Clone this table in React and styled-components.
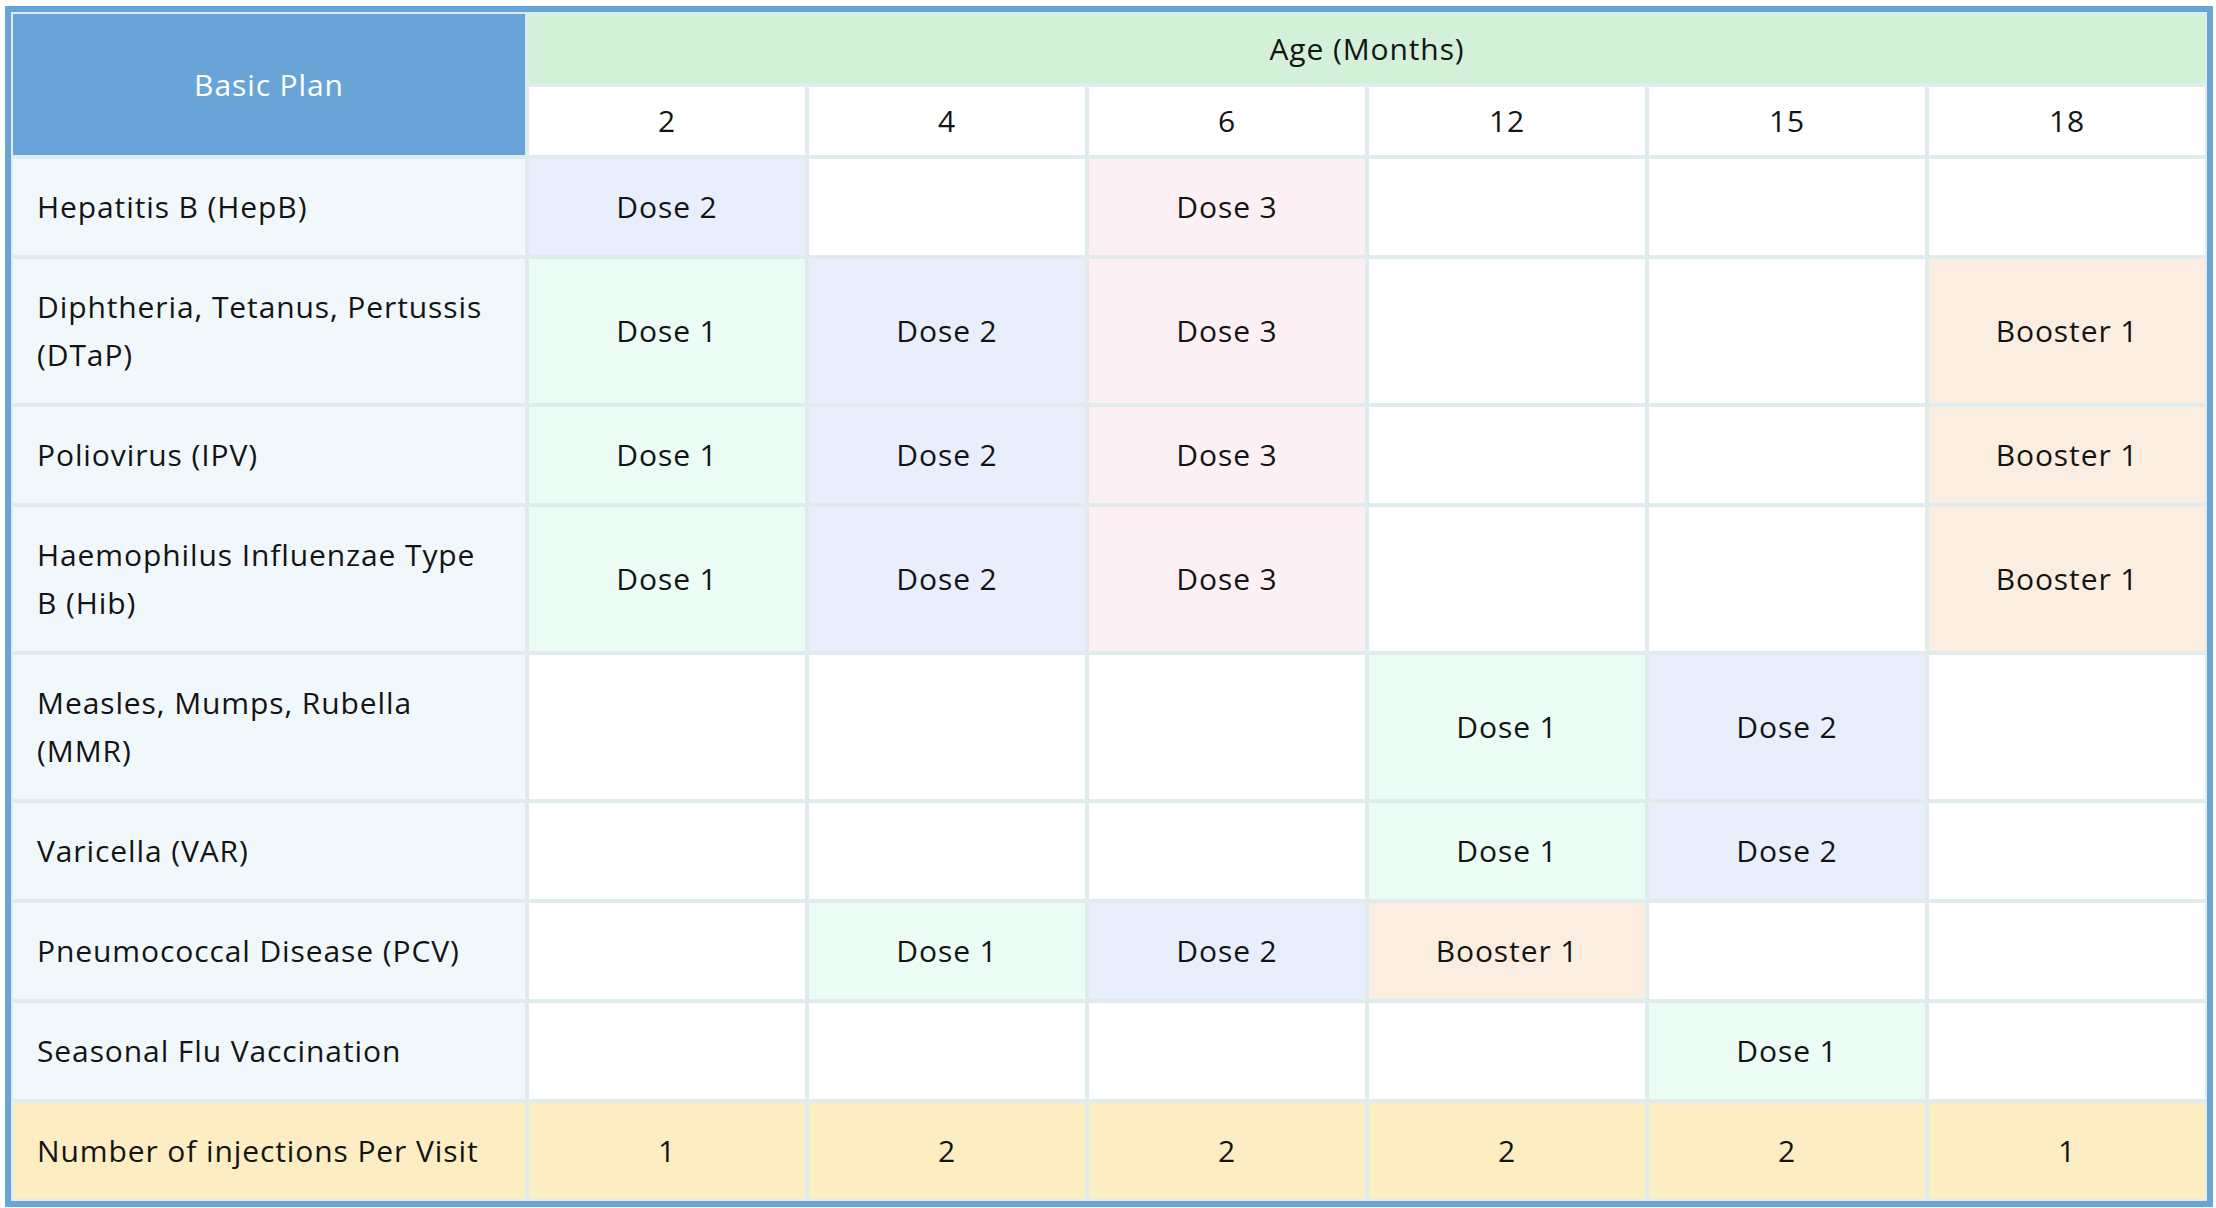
import React from "react";
import styled, { createGlobalStyle } from "styled-components";

const GlobalStyle = createGlobalStyle`
  html, body {
    margin: 0;
    padding: 0;
    background: #ffffff;
  }
  body {
    font-family: "Open Sans", "Noto Sans", sans-serif;
    color: #111111;
  }
`;

const Page = styled.div`
  padding: 6px 0 0 5px;
`;

const Table = styled.table`
  width: 2208px;
  table-layout: fixed;
  border-collapse: separate;
  border-spacing: 0;
  border: 6px solid #68a5d6;
  box-sizing: border-box;
  font-family: "Open Sans", "Noto Sans", sans-serif;
  font-size: 30px;
  letter-spacing: 0.9px;
  color: #141414;
`;

const Col = styled.col`
  width: ${(p) => p.$w}px;
`;

const HeadCell = styled.th`
  box-sizing: border-box;
  border: 2px solid #e0ebed;
  font-weight: 400;
  line-height: 48px;
  text-align: center;
  padding: 0;
  height: ${(p) => p.$h}px;
  background: ${(p) => p.$bg || "#ffffff"};
  color: ${(p) => p.$fg || "#141414"};
`;

const LabelCell = styled.td`
  box-sizing: border-box;
  border: 2px solid #e0ebed;
  background: ${(p) => p.$bg || "#f1f8fc"};
  padding: 24px 24px 24px 24px;
  line-height: 48px;
  text-align: left;
  white-space: pre-line;
  vertical-align: middle;
`;

const DoseCell = styled.td`
  box-sizing: border-box;
  border: 2px solid #e0ebed;
  background: ${(p) => p.$bg};
  padding: 24px 8px;
  line-height: 48px;
  text-align: center;
  vertical-align: middle;
`;

const doseColors = {
  "Dose 1": "#ebfcf5",
  "Dose 2": "#e8eefb",
  "Dose 3": "#fcf0f4",
  "Booster 1": "#fbeddf",
};

const ages = ["2", "4", "6", "12", "15", "18"];

const rows = [
  { name: "Hepatitis B (HepB)", doses: ["Dose 2", "", "Dose 3", "", "", ""] },
  {
    name: "Diphtheria, Tetanus, Pertussis\n(DTaP)",
    doses: ["Dose 1", "Dose 2", "Dose 3", "", "", "Booster 1"],
  },
  {
    name: "Poliovirus (IPV)",
    doses: ["Dose 1", "Dose 2", "Dose 3", "", "", "Booster 1"],
  },
  {
    name: "Haemophilus Influenzae Type\nB (Hib)",
    doses: ["Dose 1", "Dose 2", "Dose 3", "", "", "Booster 1"],
  },
  {
    name: "Measles, Mumps, Rubella\n(MMR)",
    doses: ["", "", "", "Dose 1", "Dose 2", ""],
  },
  { name: "Varicella (VAR)", doses: ["", "", "", "Dose 1", "Dose 2", ""] },
  {
    name: "Pneumococcal Disease (PCV)",
    doses: ["", "Dose 1", "Dose 2", "Booster 1", "", ""],
  },
  { name: "Seasonal Flu Vaccination", doses: ["", "", "", "", "Dose 1", ""] },
];

const totals = ["1", "2", "2", "2", "2", "1"];

export default function App() {
  return (
    <Page>
      <GlobalStyle />
      <Table>
        <colgroup>
          <Col $w={516} />
          {ages.map((a) => (
            <Col key={a} $w={280} />
          ))}
        </colgroup>
        <thead>
          <tr>
            <HeadCell rowSpan={2} $bg="#68a5d6" $fg="#ffffff" $h={73}>
              Basic Plan
            </HeadCell>
            <HeadCell colSpan={6} $bg="#d3f0d8" $h={73}>
              Age (Months)
            </HeadCell>
          </tr>
          <tr>
            {ages.map((a) => (
              <HeadCell key={a} $h={72}>
                {a}
              </HeadCell>
            ))}
          </tr>
        </thead>
        <tbody>
          {rows.map((r) => (
            <tr key={r.name}>
              <LabelCell>{r.name}</LabelCell>
              {r.doses.map((d, i) => (
                <DoseCell key={i} $bg={d ? doseColors[d] : "#ffffff"}>
                  {d}
                </DoseCell>
              ))}
            </tr>
          ))}
          <tr>
            <LabelCell $bg="#fcedc2">Number of injections Per Visit</LabelCell>
            {totals.map((t, i) => (
              <DoseCell key={i} $bg="#fcedc2">
                {t}
              </DoseCell>
            ))}
          </tr>
        </tbody>
      </Table>
    </Page>
  );
}
